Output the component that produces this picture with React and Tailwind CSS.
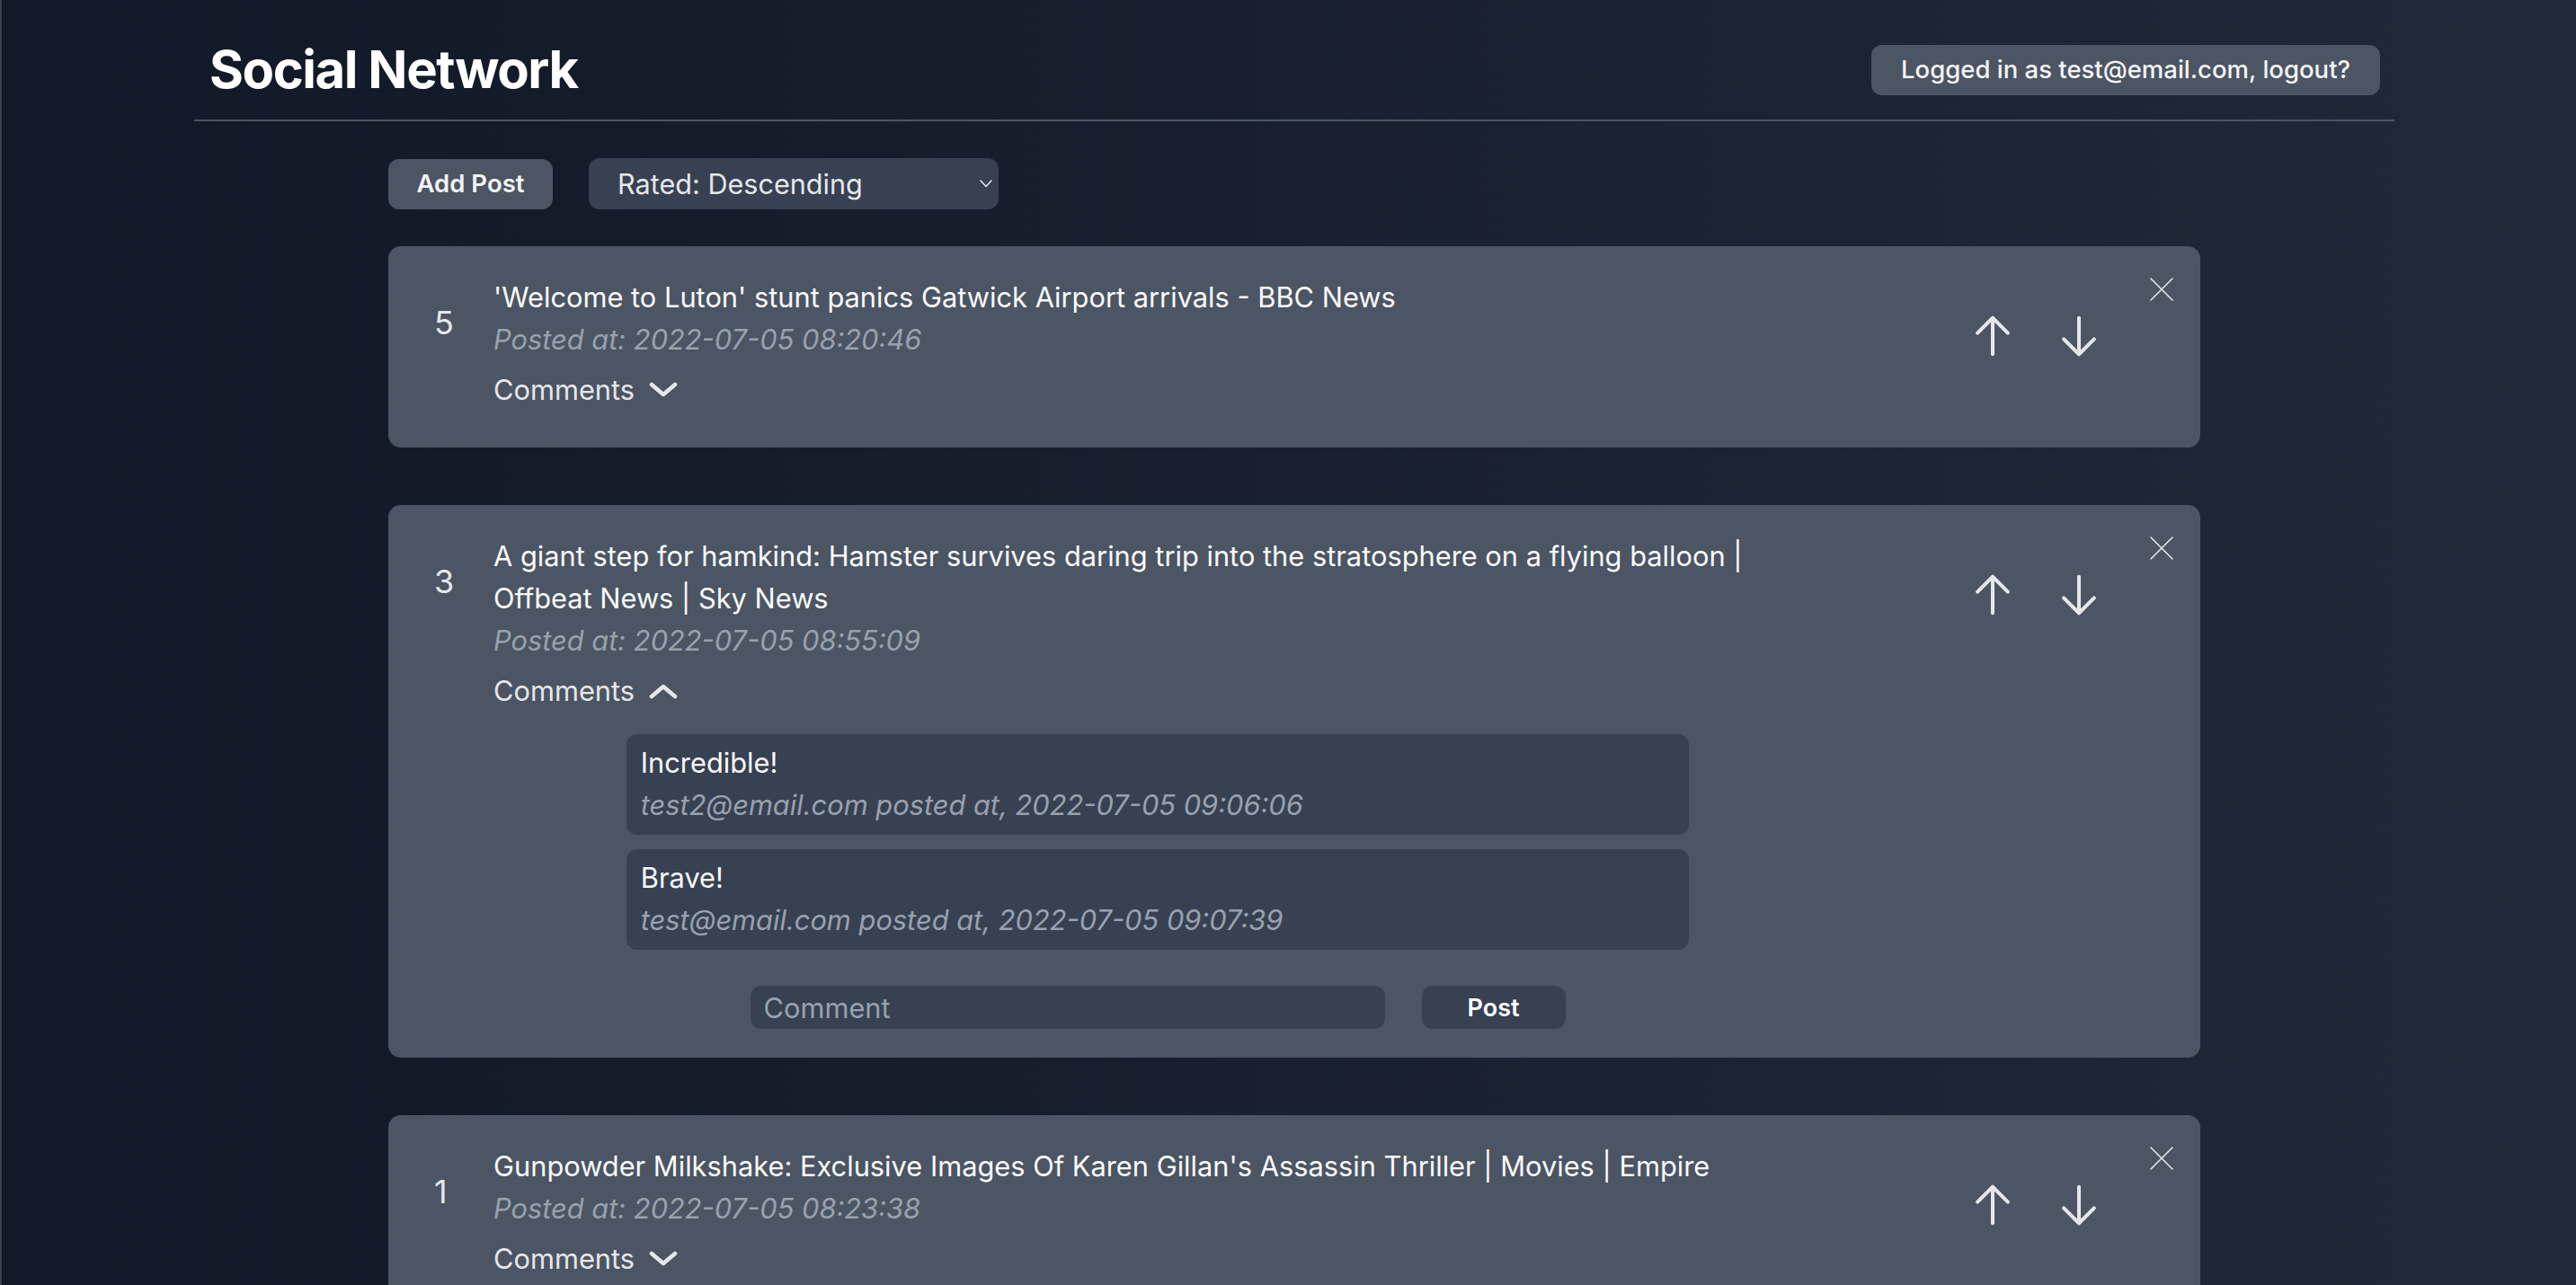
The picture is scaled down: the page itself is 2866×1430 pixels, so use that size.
import React from "react";

function ArrowUp() {
  return (
    <svg width="54" height="54" viewBox="0 0 24 24" fill="none" stroke="currentColor" strokeWidth="1.8" strokeLinecap="round" strokeLinejoin="round">
      <path d="M4.5 10.5L12 3m0 0l7.5 7.5M12 3v18" />
    </svg>
  );
}

function ArrowDown() {
  return (
    <svg width="54" height="54" viewBox="0 0 24 24" fill="none" stroke="currentColor" strokeWidth="1.8" strokeLinecap="round" strokeLinejoin="round">
      <path d="M19.5 13.5L12 21m0 0l-7.5-7.5M12 21V3" />
    </svg>
  );
}

function Close() {
  return (
    <svg width="26" height="26" viewBox="0 0 26 26" fill="none" stroke="currentColor" strokeWidth="1.6" strokeLinecap="round">
      <path d="M1 1l24 24M25 1L1 25" />
    </svg>
  );
}

function Chevron({ up }) {
  return (
    <svg width="32" height="18" viewBox="0 0 32 18" fill="none" stroke="currentColor" strokeWidth="4.5" strokeLinecap="round" strokeLinejoin="round">
      {up ? <polyline points="3,15 16,4 29,15" /> : <polyline points="3,3 16,14 29,3" />}
    </svg>
  );
}

const posts = [
  {
    score: 5,
    title: "'Welcome to Luton' stunt panics Gatwick Airport arrivals - BBC News",
    posted: "2022-07-05 08:20:46",
    open: false,
    comments: [],
  },
  {
    score: 3,
    title:
      "A giant step for hamkind: Hamster survives daring trip into the stratosphere on a flying balloon | Offbeat News | Sky News",
    posted: "2022-07-05 08:55:09",
    open: true,
    comments: [
      { text: "Incredible!", by: "test2@email.com", at: "2022-07-05 09:06:06" },
      { text: "Brave!", by: "test@email.com", at: "2022-07-05 09:07:39" },
    ],
  },
  {
    score: 1,
    title: "Gunpowder Milkshake: Exclusive Images Of Karen Gillan's Assassin Thriller | Movies | Empire",
    posted: "2022-07-05 08:23:38",
    open: false,
    comments: [],
  },
];

function PostCard({ post }) {
  return (
    <div className="relative flex items-start bg-[#4b5563] rounded-[14px] pl-[51px] pt-[33px] pb-[41px]">
      <div className="w-[66px] mt-[34px] text-[36px] leading-none text-gray-200">{post.score}</div>
      <div className="w-[1478px] text-[30.8px] leading-[47px]">
        <div className="text-gray-50">{post.title}</div>
        <div className="italic text-gray-400">Posted at: {post.posted}</div>
        <div className="mt-[9px] flex items-center gap-[16px] text-gray-200">
          <span>Comments</span>
          <Chevron up={post.open} />
        </div>
        {post.open && (
          <div className="mt-[25px] -mb-[9px]">
            <div className="w-4/5 mx-auto flex flex-col gap-[16px]">
              {post.comments.map((c, i) => (
                <div key={i} className="bg-[#374151] rounded-[12px] pl-[16px] pt-[8px] pb-[10px]">
                  <div className="text-gray-50">{c.text}</div>
                  <div className="italic text-gray-400">
                    {c.by} posted at, {c.at}
                  </div>
                </div>
              ))}
            </div>
            <div className="mt-[40px] flex justify-center gap-[41px]">
              <div className="w-[706px] h-[48px] bg-[#374151] rounded-[12px] pl-[15px] flex items-center text-[30.8px] text-gray-400">
                Comment
              </div>
              <button className="w-[160px] h-[48px] bg-[#374151] rounded-[12px] text-[27px] font-semibold text-white">
                Post
              </button>
            </div>
          </div>
        )}
      </div>
      <div className="ml-[163px] mt-[40px] flex gap-[42px] text-gray-200">
        <ArrowUp />
        <ArrowDown />
      </div>
      <div className="absolute top-[35px] right-[30px] text-gray-200">
        <Close />
      </div>
    </div>
  );
}

export default function App() {
  return (
    <div className="min-h-screen pl-[12px] bg-gradient-to-r from-[#111827] to-[#1f2937] border-l-2 border-[#3b404c] font-['Inter',sans-serif]">
      <div className="w-[2448px] mx-auto">
        <header className="h-[135px] pt-[22px] pl-[17px] pr-[16px] border-b-2 border-[#4b5563] flex items-center justify-between">
          <h1 className="text-[58px] font-bold text-white tracking-tight">Social Network</h1>
          <button className="h-[56px] w-[566px] bg-[#4b5563] rounded-[12px] text-[27.5px] font-medium text-gray-100">
            Logged in as test@email.com, logout?
          </button>
        </header>
        <div className="w-[2016px] mx-auto pt-[41px] pb-[40px]">
          <div className="flex items-center gap-[40px]">
            <button className="w-[183px] h-[56px] bg-[#4b5563] rounded-[12px] text-[27.5px] font-semibold text-gray-100">
              Add Post
            </button>
            <div className="w-[456px] h-[57px] bg-[#374151] rounded-[12px] pl-[32px] pr-[7px] flex items-center justify-between text-[30.6px] text-gray-200">
              <span>Rated: Descending</span>
              <svg width="14" height="9" viewBox="0 0 14 9" fill="none" stroke="currentColor" strokeWidth="1.5" strokeLinecap="round" strokeLinejoin="round">
                <polyline points="1,1 7,7.5 13,1" />
              </svg>
            </div>
          </div>
          <div className="mt-[41px] flex flex-col gap-[64px]">
            {posts.map((p, i) => (
              <PostCard key={i} post={p} />
            ))}
          </div>
        </div>
      </div>
    </div>
  );
}
